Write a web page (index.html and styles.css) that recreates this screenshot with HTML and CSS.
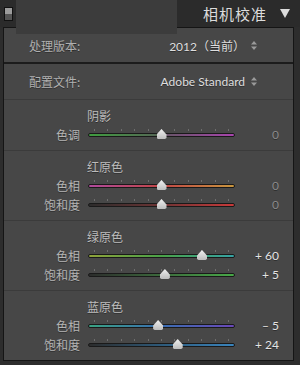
FILE: index.html
```html
<!DOCTYPE html>
<html lang="zh-CN">
  <head>
    <meta charset="UTF-8" />
    <meta name="viewport" content="width=device-width, initial-scale=1.0" />
    <title>相机校准</title>
    <link rel="stylesheet" href="styles.css">
  </head>
  <body>
    <div class="header">
      <div class="toggle-box"><span></span></div>
      <div class="header-title">
        <span>相机校准</span>
        <svg class="collapse-icon" width="10" height="9" viewBox="0 0 10 9">
          <path d="M0 0 L10 0 L5 9 Z" fill="#dcdcdc" />
        </svg>
      </div>
    </div>
    <div class="cover"></div>

    <div class="panel">
      <div class="section section-top">
        <div class="select-row">
          <span class="select-label">处理版本:</span>
          <span class="select-value">2012（当前）</span>
          <svg class="updown" width="6" height="9" viewBox="0 0 6 9">
            <path d="M0 3.5 L3 0 L6 3.5 Z M0 5.5 L3 9 L6 5.5 Z" fill="#9a9a9a" />
          </svg>
        </div>
      </div>

      <div class="section section-profile">
        <div class="select-row">
          <span class="select-label">配置文件:</span>
          <span class="select-value">Adobe Standard</span>
          <svg class="updown" width="6" height="9" viewBox="0 0 6 9">
            <path d="M0 3.5 L3 0 L6 3.5 Z M0 5.5 L3 9 L6 5.5 Z" fill="#9a9a9a" />
          </svg>
        </div>
      </div>

      <div class="section">
        <div class="group-title">阴影</div>
        <div class="slider-row">
          <span class="slider-label">色调</span>
          <div class="slider">
            <div class="ticks"><i></i><i></i><i></i><i></i><i></i><i></i><i></i><i></i><i></i><i></i><i></i></div>
            <div class="track track-tint"></div>
            <div class="range"><span class="thumb" style="left: 50%"></span></div>
          </div>
          <span class="slider-value zero">0</span>
        </div>
      </div>

      <div class="section">
        <div class="group-title">红原色</div>
        <div class="slider-row">
          <span class="slider-label">色相</span>
          <div class="slider">
            <div class="ticks"><i></i><i></i><i></i><i></i><i></i><i></i><i></i><i></i><i></i><i></i><i></i></div>
            <div class="track track-red-hue"></div>
            <div class="range"><span class="thumb" style="left: 50%"></span></div>
          </div>
          <span class="slider-value zero">0</span>
        </div>
        <div class="slider-row">
          <span class="slider-label">饱和度</span>
          <div class="slider">
            <div class="ticks"><i></i><i></i><i></i><i></i><i></i><i></i><i></i><i></i><i></i><i></i><i></i></div>
            <div class="track track-red-sat"></div>
            <div class="range"><span class="thumb" style="left: 50%"></span></div>
          </div>
          <span class="slider-value zero">0</span>
        </div>
      </div>

      <div class="section">
        <div class="group-title">绿原色</div>
        <div class="slider-row">
          <span class="slider-label">色相</span>
          <div class="slider">
            <div class="ticks"><i></i><i></i><i></i><i></i><i></i><i></i><i></i><i></i><i></i><i></i><i></i></div>
            <div class="track track-green-hue"></div>
            <div class="range"><span class="thumb" style="left: 80%"></span></div>
          </div>
          <span class="slider-value">+ 60</span>
        </div>
        <div class="slider-row">
          <span class="slider-label">饱和度</span>
          <div class="slider">
            <div class="ticks"><i></i><i></i><i></i><i></i><i></i><i></i><i></i><i></i><i></i><i></i><i></i></div>
            <div class="track track-green-sat"></div>
            <div class="range"><span class="thumb" style="left: 52.5%"></span></div>
          </div>
          <span class="slider-value">+ 5</span>
        </div>
      </div>

      <div class="section">
        <div class="group-title">蓝原色</div>
        <div class="slider-row">
          <span class="slider-label">色相</span>
          <div class="slider">
            <div class="ticks"><i></i><i></i><i></i><i></i><i></i><i></i><i></i><i></i><i></i><i></i><i></i></div>
            <div class="track track-blue-hue"></div>
            <div class="range"><span class="thumb" style="left: 47.5%"></span></div>
          </div>
          <span class="slider-value">– 5</span>
        </div>
        <div class="slider-row">
          <span class="slider-label">饱和度</span>
          <div class="slider">
            <div class="ticks"><i></i><i></i><i></i><i></i><i></i><i></i><i></i><i></i><i></i><i></i><i></i></div>
            <div class="track track-blue-sat"></div>
            <div class="range"><span class="thumb" style="left: 62%"></span></div>
          </div>
          <span class="slider-value">+ 24</span>
        </div>
      </div>
    </div>
  </body>
</html>
```

FILE: styles.css
```css
/* Camera calibration panel */
body {
  margin: 0;
  width: 300px;
  height: 365px;
  overflow: hidden;
  position: relative;
  background: #2d2d2d;
  font-family: Lato, "Noto Sans CJK SC", sans-serif;
  font-size: 12px;
}

.header {
  height: 27px;
  display: flex;
  align-items: center;
  justify-content: space-between;
  padding: 0 10px 0 4px;
  background: #2b2b2b;
}

.toggle-box {
  width: 7px;
  height: 12px;
  border: 1px solid #111;
  background: #555;
  display: flex;
  flex-direction: column;
}

.toggle-box span {
  height: 6px;
  background: #9c9c9c;
}

.header-title {
  display: flex;
  align-items: center;
  gap: 13px;
  color: #dcdcdc;
  font-family: "Noto Sans CJK SC", sans-serif;
  font-size: 15px;
  letter-spacing: 1px;
}

/* grey block laid over the header */
.cover {
  position: absolute;
  left: 16px;
  top: 0;
  width: 161px;
  height: 34px;
  background: #3c3c3c;
}

.panel {
  margin-left: 3px;
  width: 289px;
  height: 332px;
  border: 1px solid #151515;
  background: #474747;
  color: #b4b4b4;
  text-shadow: 0 1px 0 rgba(0, 0, 0, 0.35);
}

.section {
  padding: 8px 0 6px;
  border-bottom: 1px solid #3b3b3b;
}

.section:last-child {
  border-bottom: none;
}

.section-top {
  height: 34px;
  padding: 0;
  border-bottom: 2px solid #1c1c1c;
}

.section-profile {
  height: 35px;
  padding: 0;
}

.select-row {
  height: 100%;
  display: flex;
  align-items: center;
  padding: 0 36px 0 25px;
}

.select-label {
  font-family: "Noto Sans CJK SC", sans-serif;
  color: #b0b0b0;
}

.select-value {
  margin-left: auto;
  color: #dedede;
}

.updown {
  margin-left: 6px;
}

.group-title {
  height: 16px;
  line-height: 16px;
  margin-bottom: 1px;
  padding-left: 83px;
  font-family: "Noto Sans CJK SC", sans-serif;
  color: #bcbcbc;
}

.slider-row {
  height: 19px;
  display: flex;
  align-items: center;
}

.slider-label {
  width: 76px;
  text-align: right;
  font-family: "Noto Sans CJK SC", sans-serif;
  color: #b4b4b4;
}

.slider {
  position: relative;
  width: 147px;
  height: 19px;
  margin-left: 8px;
}

.ticks {
  position: absolute;
  left: 6px;
  right: 6px;
  top: 4px;
  display: flex;
  justify-content: space-between;
}

.ticks i {
  width: 1px;
  height: 2px;
  background: #6e6e6e;
}

.track {
  position: absolute;
  left: 0;
  right: 0;
  top: 8px;
  height: 2px;
  border: 1px solid #1a1a1a;
  border-radius: 3px;
}

.track-tint {
  background: linear-gradient(to right, #3f9c3f, #556655 48%, #665566 52%, #a845ad);
}

.track-red-hue {
  background: linear-gradient(to right, #b04a9c, #c24646 50%, #c8963e);
}

.track-red-sat {
  background: linear-gradient(to right, #2c2c2c, #6e3434 50%, #c83a3a);
}

.track-green-hue {
  background: linear-gradient(to right, #8ea23a, #4aa248 50%, #36a2a4);
}

.track-green-sat {
  background: linear-gradient(to right, #2c2c2c, #3c6a3c 50%, #48a848);
}

.track-blue-hue {
  background: linear-gradient(to right, #3aa282, #3a6eb2 50%, #6a48b8);
}

.track-blue-sat {
  background: linear-gradient(to right, #2c2c2c, #2e5a7a 50%, #3a84bc);
}

.range {
  position: absolute;
  left: 6px;
  right: 6px;
  top: 0;
  height: 19px;
}

.thumb {
  position: absolute;
  top: 4px;
  width: 10px;
  height: 10px;
  margin-left: -5px;
  background: linear-gradient(to bottom, #f0f0f0, #bdbdbd);
  clip-path: polygon(50% 0, 100% 55%, 100% 90%, 85% 100%, 15% 100%, 0 90%, 0 55%);
  filter: drop-shadow(0 1px 0 #222);
}

.slider-value {
  width: 44px;
  text-align: right;
  color: #e4e4e4;
}

.slider-value.zero {
  color: #8a8a8a;
}
```
